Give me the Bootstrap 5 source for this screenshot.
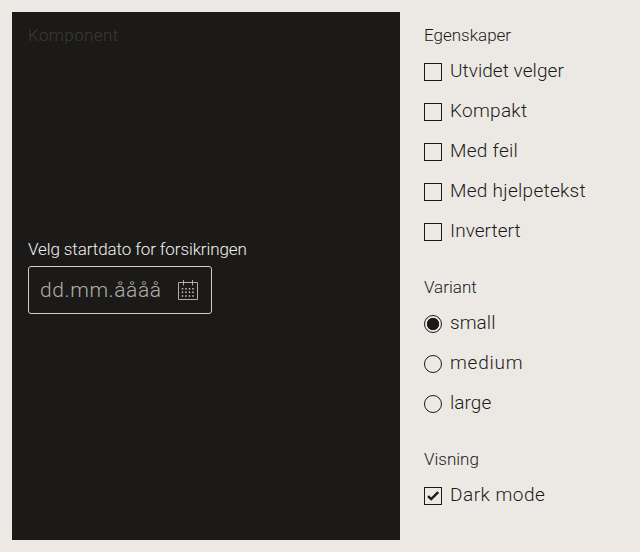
<!DOCTYPE html>
<html lang="nb">
<head>
<meta charset="utf-8">
<meta name="viewport" content="width=device-width, initial-scale=1">
<title>Komponent</title>
<link href="https://cdn.jsdelivr.net/npm/bootstrap@5.3.0/dist/css/bootstrap.min.css" rel="stylesheet">
<style>
body{background:#ece9e5;color:#1b1a18;font-family:"Roboto","Liberation Sans",sans-serif;font-weight:300;height:552px;overflow:hidden}
.page{padding:12px}
.preview{width:388px;height:528px;background:#1b1a18;color:#f4f2ef;padding:12px 16px}
.heading{font-size:17px;line-height:22px;padding-bottom:2px;white-space:nowrap}
.preview .heading{color:#3a3937;letter-spacing:.4px}
.field-wrap{margin-top:190px}
.field-label{font-size:17px;line-height:22px;margin-bottom:6px;white-space:nowrap;letter-spacing:-.1px}
.date-field{width:184px;height:48px;border:1px solid #d0cdc9;border-radius:3px;padding:0 13px 0 11px}
.date-text{font-size:21px;line-height:46px;color:#b0aeab;white-space:nowrap;letter-spacing:.6px}
.settings{padding:12px 0 0 24px}
.group{margin:0 0 24px}
.options{padding-top:4px}
.option{height:40px;gap:8px}
.option span{font-size:19px;line-height:28px;margin-top:-3px;white-space:nowrap;letter-spacing:.28px}
.option .snug{letter-spacing:.06px}
.option .loose{letter-spacing:.5px}
.option .wide{letter-spacing:.75px}
.option input{appearance:none;width:18px;height:18px;margin:0;border:1px solid #1b1a18;background:transparent;flex:none}
.option input[type=radio]{border-radius:50%}
.option input[type=radio]:checked{background:radial-gradient(circle,#1b1a18 5.8px,transparent 6.5px)}
.option input[type=checkbox]:checked{background:url("data:image/svg+xml,%3Csvg xmlns='http://www.w3.org/2000/svg' viewBox='0 0 16 16'%3E%3Cpath d='M3 8.2l3.2 3L13.2 4.2' fill='none' stroke='%231b1a18' stroke-width='2.4'/%3E%3C/svg%3E") center/16px no-repeat}
</style>
<script src="https://cdn.jsdelivr.net/npm/bootstrap@5.3.0/dist/js/bootstrap.bundle.min.js"></script>
</head>
<body class="m-0">
<main class="page d-flex w-100">
<section class="preview flex-shrink-0">
<div class="heading">Komponent</div>
<div class="field-wrap">
<div class="field-label">Velg startdato for forsikringen</div>
<div class="date-field d-flex align-items-center justify-content-between">
<span class="date-text">dd.mm.åååå</span>
<svg width="20" height="20" viewBox="0 0 20 20" fill="none" stroke="#b0aeab"><path d="M.5 2.5h19v17H.5zM5.5 0v5.5M14.5 0v5.5"/><path d="M3.8 8.7h14M3.8 12.3h14M3.8 16h14" stroke="#d0cdc9" stroke-width="1.4" stroke-dasharray="1.4 2.1 1.4 2.1 1.4 2.1 1.4 20"/></svg>
</div>
</div>
</section>
<aside class="settings">
<div class="group"><div class="heading">Egenskaper</div>
<div class="options">
<label class="option d-flex align-items-center"><input type="checkbox"><span class="snug">Utvidet velger</span></label>
<label class="option d-flex align-items-center"><input type="checkbox"><span>Kompakt</span></label>
<label class="option d-flex align-items-center"><input type="checkbox"><span>Med feil</span></label>
<label class="option d-flex align-items-center"><input type="checkbox"><span>Med hjelpetekst</span></label>
<label class="option d-flex align-items-center"><input type="checkbox"><span class="snug">Invertert</span></label>
</div></div>
<div class="group"><div class="heading">Variant</div>
<div class="options">
<label class="option d-flex align-items-center"><input type="radio" name="v" checked><span class="snug">small</span></label>
<label class="option d-flex align-items-center"><input type="radio" name="v"><span class="wide">medium</span></label>
<label class="option d-flex align-items-center"><input type="radio" name="v"><span class="snug">large</span></label>
</div></div>
<div class="group mb-0"><div class="heading">Visning</div>
<div class="options">
<label class="option d-flex align-items-center"><input type="checkbox" checked><span class="loose">Dark mode</span></label>
</div></div>
</aside>
</main>
</body>
</html>
